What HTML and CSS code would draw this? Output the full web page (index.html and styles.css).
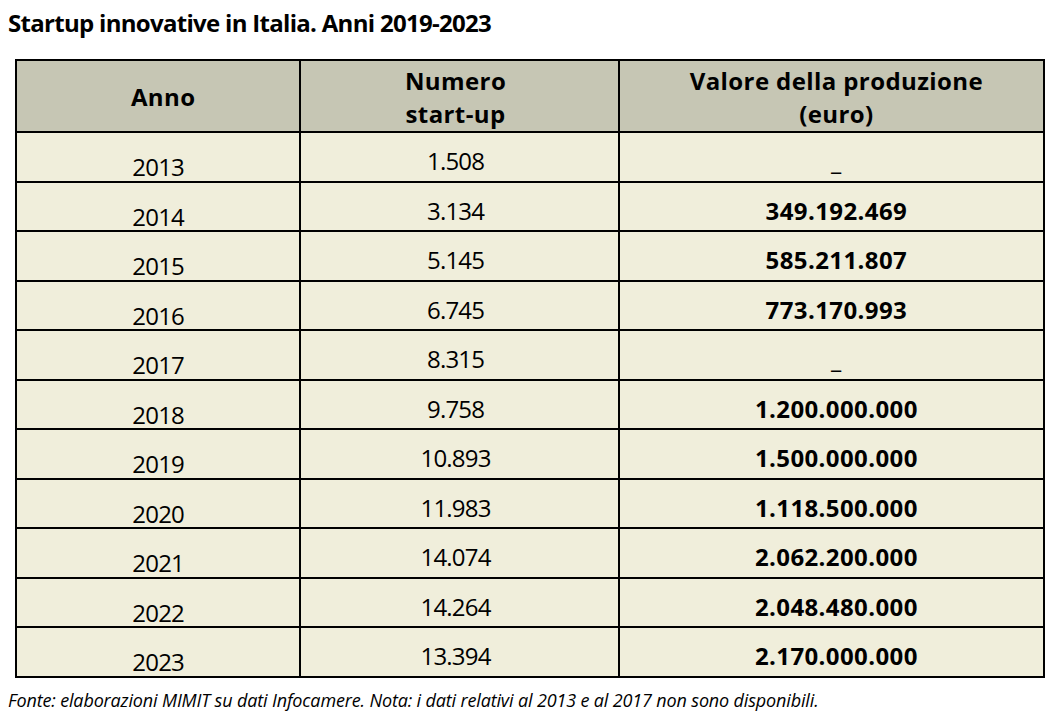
FILE: index.html
```html
<!DOCTYPE html>
<html lang="it">
<head>
<meta charset="utf-8">
<title>Startup innovative in Italia</title>
<link rel="stylesheet" href="styles.css">
</head>
<body>
<h1 class="title">Startup innovative in Italia. Anni 2019-2023</h1>
<table class="data">
  <colgroup>
    <col class="c-anno"><col class="c-num"><col class="c-val">
  </colgroup>
  <thead>
    <tr><th class="single anno-h">Anno</th><th class="num">Numero<br>start-up</th><th class="val-h">Valore della produzione<br>(euro)</th></tr>
  </thead>
  <tbody>
    <tr><td class="anno">2013</td><td class="num">1.508</td><td class="val dash">_</td></tr>
    <tr><td class="anno">2014</td><td class="num">3.134</td><td class="val">349.192.469</td></tr>
    <tr><td class="anno">2015</td><td class="num">5.145</td><td class="val">585.211.807</td></tr>
    <tr><td class="anno">2016</td><td class="num">6.745</td><td class="val">773.170.993</td></tr>
    <tr><td class="anno">2017</td><td class="num">8.315</td><td class="val dash">_</td></tr>
    <tr><td class="anno">2018</td><td class="num">9.758</td><td class="val">1.200.000.000</td></tr>
    <tr><td class="anno">2019</td><td class="num">10.893</td><td class="val">1.500.000.000</td></tr>
    <tr><td class="anno">2020</td><td class="num">11.983</td><td class="val">1.118.500.000</td></tr>
    <tr><td class="anno">2021</td><td class="num">14.074</td><td class="val">2.062.200.000</td></tr>
    <tr><td class="anno">2022</td><td class="num">14.264</td><td class="val">2.048.480.000</td></tr>
    <tr><td class="anno">2023</td><td class="num">13.394</td><td class="val">2.170.000.000</td></tr>
  </tbody>
</table>
<p class="note">Fonte: elaborazioni MIMIT su dati Infocamere. Nota: i dati relativi al 2013 e al 2017 non sono disponibili.</p>
</body>
</html>
```
FILE: styles.css
```css
html, body {
  margin: 0;
  padding: 0;
  background: #ffffff;
}
body {
  font-family: "Open Sans", "Noto Sans", "Liberation Sans", sans-serif;
  color: #000;
  padding: 0 8px;
}
.title {
  margin: 0;
  padding-top: 8px;
  font-size: 24px;
  font-weight: 700;
  line-height: 30px;
  letter-spacing: -0.7px;
}
.data {
  margin: 21px 0 0 7px;
  width: 1030px;
  border-collapse: collapse;
  border: 2px solid #2a2a2a;
  font-size: 24px;
}
.c-anno { width: 285px; }
.c-num { width: 319px; }
.c-val { width: 426px; }
.data thead tr { height: 72px; }
.data tbody tr { height: 49.5px; }
.data th, .data td {
  border: 2px solid #000;
  text-align: center;
  padding: 0;
  vertical-align: top;
}
.data th {
  background: #c6c6b4;
  font-weight: 700;
  line-height: 33px;
  letter-spacing: 0.4px;
  padding-top: 3px;
}
.data th.single {
  padding-top: 19px;
}
.data th.anno-h {
  padding-left: 10px;
}
.data th.val-h {
  padding-left: 10px;
}
.data td {
  background: #f0eedb;
  line-height: 24px;
  letter-spacing: -0.8px;
}
.data td.anno {
  padding-top: 22px;
}
.data .num {
  padding-right: 8px;
}
.data td.num {
  padding-top: 16px;
}
.data td.val {
  padding-top: 16px;
  padding-left: 10px;
  font-weight: 700;
  letter-spacing: 0.4px;
}
.data td.dash {
  font-weight: 600;
}
.note {
  margin: 11px 0 0 0;
  font-style: italic;
  font-size: 18px;
  line-height: 22px;
  letter-spacing: -0.15px;
}
```
